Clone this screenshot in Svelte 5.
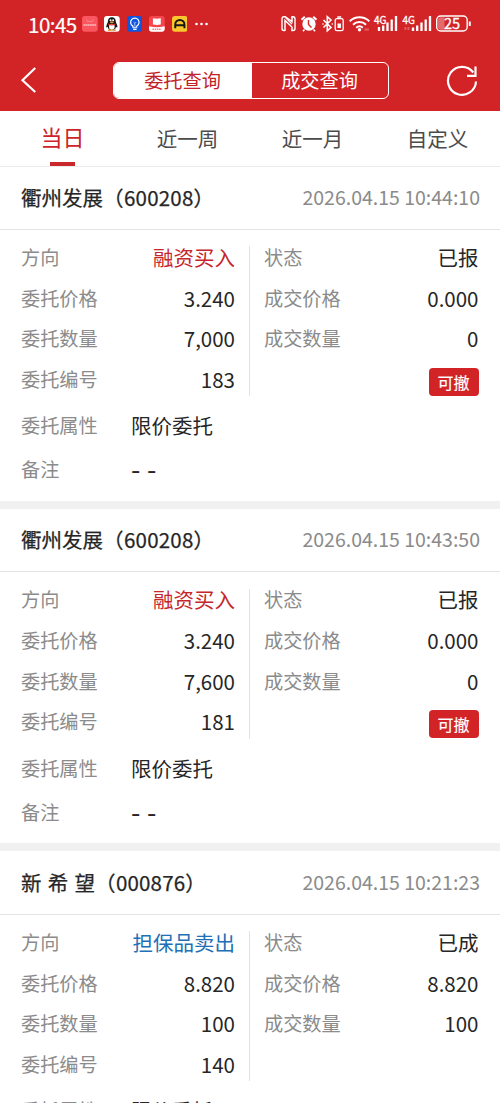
<script>
  const tabs = ['当日', '近一周', '近一月', '自定义'];
  let activeTab = '当日';
  let mode = 'orders';

  const orders = [
    {
      name: '衢州发展',
      code: '600208',
      time: '2026.04.15 10:44:10',
      side: '融资买入',
      sell: false,
      price: '3.240',
      amount: '7,000',
      id: '183',
      status: '已报',
      dealPrice: '0.000',
      dealAmount: '0',
      cancelable: true
    },
    {
      name: '衢州发展',
      code: '600208',
      time: '2026.04.15 10:43:50',
      side: '融资买入',
      sell: false,
      price: '3.240',
      amount: '7,600',
      id: '181',
      status: '已报',
      dealPrice: '0.000',
      dealAmount: '0',
      cancelable: true
    },
    {
      name: '新 希 望',
      code: '000876',
      time: '2026.04.15 10:21:23',
      side: '担保品卖出',
      sell: true,
      price: '8.820',
      amount: '100',
      id: '140',
      status: '已成',
      dealPrice: '8.820',
      dealAmount: '100',
      cancelable: false
    }
  ];
</script>

<div class="screen">
  <header>
    <div class="status-bar">
      <span class="clock">10:45</span>
      <div class="apps">
        <svg viewBox="0 0 16 16">
          <rect width="16" height="16" rx="3" fill="#fb5560" />
          <path d="M4 3.5l1.5 1.3M12 3.5l-1.5 1.3M5 5.5h6" stroke="#fd8a8e" fill="none" />
          <path d="M1.5 9.2h13" stroke="#ffc0bf" stroke-width="1.6" stroke-dasharray="1.8 .4" />
        </svg>
        <svg viewBox="0 0 16 16">
          <rect width="16" height="16" rx="3" fill="#fff" />
          <path d="M8 1.3c-2.7 0-4 1.9-4 4.3 0 1.4-1.7 3.2-1.7 5.3 0 1.1.8.9 1.5 0 .3 2 1.3 3.6 4.2 3.6s3.9-1.6 4.2-3.6c.7.9 1.5 1.1 1.5 0 0-2.1-1.7-3.9-1.7-5.3 0-2.4-1.3-4.3-4-4.3z" fill="#161616" />
          <ellipse cx="8" cy="11" rx="2.9" ry="3" fill="#fff" />
          <circle cx="6.7" cy="4.3" r="1" fill="#fff" />
          <circle cx="9.3" cy="4.3" r="1" fill="#fff" />
          <ellipse cx="8" cy="6.3" rx="2.2" ry=".8" fill="#f5a623" />
          <path d="M4.2 7.7q3.8 1.5 7.6 0v1.3q-3.8 1.5-7.6 0z" fill="#d9302d" />
          <path d="M4 14.5h3.3M8.7 14.5H12" stroke="#e8a23a" stroke-width="1.4" />
        </svg>
        <svg viewBox="0 0 16 16">
          <rect width="16" height="16" rx="3" fill="#1155dc" />
          <path d="M6 11.5V10.3a4.3 4.3 0 1 1 4 0v1.2z" fill="none" stroke="#fff" stroke-width="1.2" />
          <path d="M6.2 13.5h3.6" stroke="#fff" stroke-width="1.4" />
          <path d="M6.7 6.2l1.3 1.3 1.3-1.3M8 7.5v3" fill="none" stroke="#cfe0ff" stroke-width=".8" />
        </svg>
        <svg viewBox="0 0 16 16">
          <rect width="16" height="16" rx="3" fill="#f5474b" />
          <path d="M4 2.2q2.2 0 4 .6 1.8-.6 4-.6v6.5q-2.2 0-4 .6-1.8-.6-4-.6z" fill="#fff" />
          <path d="M0 10.5q8 2 16 0V13a3 3 0 0 1-3 3H3a3 3 0 0 1-3-3z" fill="#fff" />
          <path d="M3.5 13.5h9" stroke="#e88" stroke-width="1.6" stroke-dasharray="1.6 .6" />
        </svg>
        <svg viewBox="0 0 16 16">
          <rect width="16" height="16" rx="3" fill="#fbc52d" />
          <path d="M3.3 12.5V8.7a4.7 4.7 0 0 1 9.4 0v3.8M3.3 9.4h9.4" fill="none" stroke="#161616" stroke-width="2" />
        </svg>
      </div>
      <svg class="more" width="13" height="4" viewBox="0 0 13 4" fill="#fff">
        <circle cx="1.5" cy="2" r="1.3" /><circle cx="6.5" cy="2" r="1.3" /><circle cx="11.5" cy="2" r="1.3" />
      </svg>

      <svg class="system" width="190" height="18" viewBox="0 0 190 18" fill="none" stroke="#fff">
        <!-- nfc -->
        <path d="M4.5 1.7H3Q1 1.7 1 4v9.5q0 2 2 2h1M10.5 1.7H12q2 0 2 2.3v9.5q0 2-2 2h-1.5" stroke-width="1.4" />
        <path d="M4 16V5.5l7 6.5M11 1.5v5L4 1.5M11 16V12" stroke-width="1.5" />
        <path d="M4.5 2.5l6.5 6.5" stroke-width="1.3" />
        <!-- alarm -->
        <circle cx="28" cy="9" r="6.7" fill="#fff" stroke="none" />
        <path d="M20.5 4.7l3.3-3M35.5 4.7l-3.3-3" stroke-width="2" />
        <path d="M23.5 14.5l-1.5 1.7M32.5 14.5l1.5 1.7" stroke-width="1.6" />
        <path d="M27.5 5v4.5l3 3" stroke="#d22427" stroke-width="1.4" />
        <!-- bluetooth with device battery -->
        <path d="M42.5 5l7.5 7.5-3.7 3.3V1.7L50 5l-7.5 7.5" stroke-width="1.6" />
        <circle cx="42" cy="9" r=".8" fill="#fff" stroke="none" />
        <circle cx="51.3" cy="9" r=".8" fill="#fff" stroke="none" />
        <rect x="54.2" y="3.7" width="8" height="12" rx="1.8" stroke-width="1.3" />
        <path d="M56.2 2h4" stroke-width="1.5" />
        <path d="M58.2 8.5v4.5" stroke-width="3.4" />
        <!-- wifi -->
        <path d="M68.7 6.3a14 14 0 0 1 19.6 0M72 9.7a9.2 9.2 0 0 1 13 0M75.2 12.7a5 5 0 0 1 6.6 0" stroke-width="2" />
        <circle cx="78.5" cy="14.8" r="1.7" fill="#fff" stroke="none" />
        <path d="M83.5 14.5h4.5" stroke="#e2605f" stroke-width="2.2" />
        <!-- sim 1 -->
        <path d="M98 16v-4M102.2 16v-5.5M106.5 16V7.5M110.7 16V4.5M115 16V1" stroke-width="2.3" />
        <!-- sim 2 -->
        <path d="M132 16v-3.5M136.2 16v-5.5M140.5 16V7.5M144.7 16V4.5M149 16V1" stroke-width="2.3" />
        <path d="M123.5 13.5h1.8M126.5 13.5h1.8" stroke="#e2605f" stroke-width="3" />
        <!-- phone battery -->
        <rect x="155.7" y="1" width="30.5" height="15" rx="4" stroke-width="1.4" />
        <path d="M160 2.2h3.5v12.6H160q-3-.2-3-3V5q0-2.8 3-2.8z" fill="#e56a6b" stroke="none" />
        <path d="M188.8 6.5v4.5" stroke-width="2" />
        <g class="net">
          <text x="93" y="8.5">4G</text>
          <text x="121.5" y="8.5">4G</text>
        </g>
        <text class="level" x="171" y="14">25</text>
      </svg>
    </div>

    <div class="nav">
      <svg class="back" width="18" height="28" viewBox="0 0 18 28">
        <path d="M15.2 2L2.5 14.2 15.2 26" />
      </svg>
      <div class="segment">
        <button class:on={mode === 'orders'} on:click={() => (mode = 'orders')}>委托查询</button>
        <button class:on={mode === 'deals'} on:click={() => (mode = 'deals')}>成交查询</button>
      </div>
      <svg class="refresh" width="32" height="32" viewBox="0 0 32 32">
        <path d="M30 17.5A14 14 0 1 1 27.3 8.5" />
        <path d="M29.5 2.5v9.3H21" />
      </svg>
    </div>
  </header>

  <nav class="tabs">
    {#each tabs as tab}
      <button class="tab" class:active={tab === activeTab} on:click={() => (activeTab = tab)}>
        {tab}
      </button>
    {/each}
  </nav>

  <main>
    {#each orders as order}
      <article class="order">
        <div class="order-head">
          <h2>{order.name}（<span>{order.code}</span>）</h2>
          <time>{order.time}</time>
        </div>
        <div class="columns">
          <dl>
            <div class="row">
              <dt>方向</dt>
              <dd class:buy={!order.sell} class:sell={order.sell}>{order.side}</dd>
            </div>
            <div class="row"><dt>委托价格</dt><dd>{order.price}</dd></div>
            <div class="row"><dt>委托数量</dt><dd>{order.amount}</dd></div>
            <div class="row"><dt>委托编号</dt><dd>{order.id}</dd></div>
          </dl>
          <dl class="deal">
            <div class="row"><dt>状态</dt><dd>{order.status}</dd></div>
            <div class="row"><dt>成交价格</dt><dd>{order.dealPrice}</dd></div>
            <div class="row"><dt>成交数量</dt><dd>{order.dealAmount}</dd></div>
            {#if order.cancelable}
              <div class="row action"><button class="cancel">可撤</button></div>
            {/if}
          </dl>
        </div>
        <dl class="extra">
          <div class="row"><dt>委托属性</dt><dd>限价委托</dd></div>
          <div class="row"><dt>备注</dt><dd class="empty">- -</dd></div>
        </dl>
      </article>
    {/each}
  </main>
</div>

<style>
  :global(body) {
    background: #fff;
  }

  .screen {
    width: 500px;
    height: 1103px;
    overflow: hidden;
    font-family: 'Noto Sans CJK SC', sans-serif;
    color: #262626;
    background: #fff;
  }

  button {
    margin: 0;
    padding: 0;
    border: 0;
    font: inherit;
    color: inherit;
    background: none;
  }

  header {
    height: 111px;
    color: #fff;
    background: #d22427;
  }

  .status-bar {
    display: flex;
    align-items: center;
    height: 48px;
    padding: 0 29px 0 28px;
  }

  .clock {
    width: 54px;
    font-size: 20.5px;
    line-height: 48px;
    letter-spacing: -0.5px;
    -webkit-text-stroke: 0.2px currentColor;
  }

  .apps {
    display: flex;
    gap: 6.7px;
  }

  .apps svg {
    width: 15.7px;
    height: 15.7px;
  }

  .more {
    margin-left: 8px;
  }

  .system {
    margin-left: auto;
    overflow: visible;
  }

  .system text {
    fill: #fff;
    stroke: #fff;
    stroke-width: 0.3px;
  }

  .net {
    font-size: 10px;
  }

  .system .level {
    font-size: 14.5px;
    text-anchor: middle;
  }

  .nav {
    display: flex;
    align-items: center;
    height: 64px;
    padding: 0 22px 0 20px;
  }

  .nav svg {
    fill: none;
    stroke: #fff;
    stroke-width: 2.2;
  }

  .refresh {
    margin-left: auto;
  }

  .segment {
    display: grid;
    grid-template-columns: 138px 136px;
    box-sizing: border-box;
    width: 276px;
    height: 37px;
    margin-left: 74.5px;
    border: 1px solid #fff;
    border-radius: 6px;
    overflow: hidden;
  }

  .segment button {
    font-size: 19.2px;
    line-height: 35px;
  }

  .segment .on {
    color: #c32328;
    background: #fff;
  }

  .tabs {
    display: grid;
    grid-template-columns: repeat(4, 1fr);
    height: 55px;
    border-bottom: 1px solid #ebebeb;
  }

  .tab {
    position: relative;
    height: 55px;
    padding-bottom: 2px;
    font-size: 20.5px;
    line-height: 52px;
    color: #4b4b4b;
  }

  .tab.active {
    padding-bottom: 5px;
    font-size: 22px;
    line-height: 50px;
    color: #cb2429;
  }

  .tab.active::after {
    content: '';
    position: absolute;
    bottom: 0;
    left: 50px;
    width: 25px;
    height: 4px;
    background: #c9282c;
  }

  main {
    margin-top: -1px;
  }

  .order {
    box-sizing: border-box;
    height: 342.5px;
    border-bottom: 8px solid #f1f1f1;
  }

  .order-head {
    display: flex;
    align-items: center;
    justify-content: space-between;
    box-sizing: border-box;
    height: 63.5px;
    padding: 0 20px 1px 21px;
    border-bottom: 1px solid #e4e4e4;
  }

  .order:first-child .order-head {
    border-top: 1px solid #ebebeb;
  }

  h2 {
    margin: 0;
    font-size: 20.5px;
    font-weight: 400;
    line-height: 30px;
    word-spacing: 1.6px;
    -webkit-text-stroke: 0.25px currentColor;
  }

  h2 span {
    margin-left: 0.5px;
    letter-spacing: 0.2px;
  }

  time {
    font-size: 19.5px;
    line-height: 30px;
    color: #8b8b8b;
  }

  dl,
  dd {
    margin: 0;
  }

  .columns {
    display: grid;
    grid-template-columns: 250px 1fr;
    padding-top: 7px;
  }

  .columns dl {
    padding: 0 15px 0 21px;
  }

  .columns .deal {
    position: relative;
    padding: 0 21.5px 0 14px;
  }

  .deal::before {
    content: '';
    position: absolute;
    top: 9.5px;
    left: -1px;
    width: 1px;
    height: 150px;
    background: #e2e2e2;
  }

  .row {
    display: flex;
    align-items: center;
    justify-content: space-between;
    height: 40.7px;
    line-height: 40px;
  }

  dt {
    font-size: 19.2px;
    color: #8b8b8b;
  }

  dd {
    font-size: 20.5px;
  }

  .buy {
    color: #c5262b;
  }

  .sell {
    color: #216fb5;
  }

  .row.action {
    justify-content: flex-end;
    box-sizing: border-box;
    padding-top: 6px;
  }

  .cancel {
    width: 50px;
    height: 28px;
    border-radius: 4px;
    font-size: 16px;
    line-height: 26px;
    color: #fff;
    background: #d22427;
    -webkit-text-stroke: 0.2px currentColor;
  }

  .extra {
    padding: 4px 21px 0;
  }

  .extra .row {
    justify-content: flex-start;
    height: 44px;
  }

  .extra dt {
    width: 110px;
  }

  .extra .empty {
    font-size: 27px;
    line-height: 36px;
    word-spacing: 0.6px;
  }
</style>
